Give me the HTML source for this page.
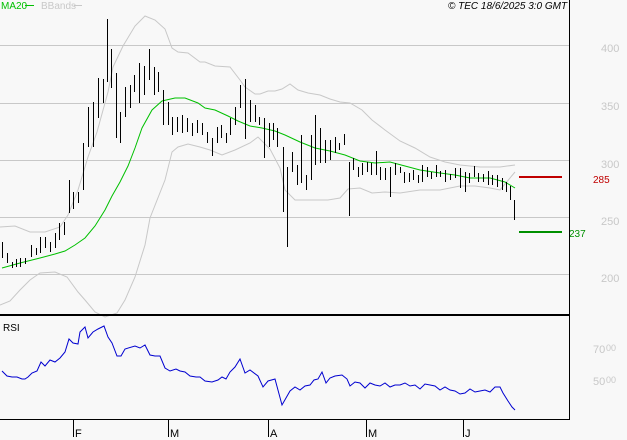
<!DOCTYPE html>
<html><head><meta charset="utf-8"><style>
html,body{margin:0;padding:0;background:#f8f8f8;}
svg{display:block;}
text{font-family:"Liberation Sans",sans-serif;}
</style></head><body>
<svg width="627" height="440" viewBox="0 0 627 440" xmlns="http://www.w3.org/2000/svg">
<rect width="627" height="440" fill="#f8f8f8"/>
<g stroke="#c8c8c8" stroke-width="1" shape-rendering="crispEdges">
<path d="M0 45.5H569M0 103.5H569M0 160.5H569M0 217.5H569M0 274.5H569"/>
</g>
<g fill="#c8c8c8" font-size="11">
<text x="601" y="52">400</text><text x="601" y="110">350</text><text x="601" y="168">300</text><text x="601" y="225">250</text><text x="601" y="282">200</text>
<text x="593" y="353" font-size="11">70</text><text x="606" y="351" font-size="9">00</text>
<text x="593" y="385" font-size="11">50</text><text x="606" y="383" font-size="9">00</text>
</g>
<!-- Bollinger -->
<polyline fill="none" stroke="#c8c8c8" stroke-width="1" points="0,227 15,226 30,232 45,232 60,227 68,215 78,190 88,157 97,132 108,92 113,67 123,46 135,26 145,16 155,20 165,29 172,48 178,52 188,53 200,62 205,62 215,66 230,67 240,80 245,87 255,94 260,94 268,91 275,91 282,89 290,84 298,90 308,93 320,95 330,99 340,102 350,103 362,110 372,120 385,130 400,141 415,148 430,157 445,162 460,165 480,167 500,167 515,165"/>
<polyline fill="none" stroke="#c8c8c8" stroke-width="1" points="0,305 10,301 20,290 30,280 40,273 55,272 67,277 78,292 85,300 95,312 105,317 117,313 125,300 135,277 145,245 150,218 165,180 172,152 178,147 188,144 200,147 210,150 222,155 235,150 250,143 258,137 270,149 280,168 285,190 295,200 310,200 328,200 340,198 348,189 360,188 372,193 385,192 400,193 420,190 440,190 460,186 475,186 490,188 500,190 515,172"/>
<!-- MA20 -->
<polyline fill="none" stroke="#00c000" stroke-width="1" points="2,268 20,263 40,258 55,254 65,251 75,245 85,238 95,226 105,210 112,196 120,182 128,166 135,148 142,128 152,110 162,101 175,98 185,98 198,103 205,108 215,110 228,116 238,121 250,126 262,128 275,131 285,135 300,142 315,148 330,151 345,155 360,161 375,163 390,162 405,166 420,170 440,173 455,175 470,178 490,178 505,182 515,188"/>
<!-- price bars -->
<path fill="none" stroke="#000" stroke-width="1" shape-rendering="crispEdges" d="
M2.5 242V258M7.5 253V263M12.5 262V268M16.5 259V267M20.5 258V267M25.5 258V264M31.5 245V257M36.5 248V255M40.5 237V253M45.5 237V248M50.5 242V252M55.5 233V248M59.5 223V240M64.5 222V235M69.5 180V213M73.5 192V209M78.5 192V203M83.5 143V190M88.5 107V147M93.5 102V147M98.5 78V118M103.5 79V103M107.5 19V82M111.5 49V88M116.5 73V138M120.5 112V143M125.5 87V117M130.5 85V108M134.5 75V92M139.5 63V103M144.5 66V95M149.5 49V80M154.5 67V95M158.5 72V92M163.5 90V125M168.5 102V125M172.5 117V135M177.5 117V132M182.5 115V133M187.5 118V132M192.5 123V136M197.5 120V133M202.5 123V135M207.5 132V143M212.5 138V156M217.5 127V143M221.5 125V138M226.5 133V143M230.5 118V135M235.5 107V125M240.5 85V108M245.5 79V139M250.5 100V122M255.5 105V122M259.5 117V125M264.5 118V158M269.5 123V147M273.5 123V140M277.5 128V147M283.5 147V212M287.5 167V247M292.5 152V172M297.5 165V185M301.5 135V183M306.5 175V190M311.5 135V180M315.5 115V165M320.5 128V163M325.5 140V163M330.5 140V160M335.5 137V153M339.5 143V150M344.5 134V145M349.5 162V216M353.5 158V170M358.5 167V177M362.5 163V175M367.5 162V172M371.5 163V175M376.5 151V175M380.5 167V180M385.5 168V180M390.5 167V197M395.5 163V175M400.5 167V173M404.5 172V183M409.5 173V182M413.5 170V180M418.5 175V183M422.5 165V182M427.5 167V177M431.5 172V179M436.5 165V177M440.5 171V177M445.5 170V182M450.5 174V180M455.5 168V178M460.5 168V188M465.5 172V192M469.5 173V183M474.5 166V177M478.5 173V182M483.5 174V182M488.5 171V185M492.5 175V185M497.5 175V187M502.5 178V190M506.5 182V192M510.5 186V200M514.5 200V220"/>
<!-- support/resist -->
<rect x="519" y="176" width="43" height="2" fill="#c00000"/>
<rect x="519" y="231" width="43" height="2" fill="#009000"/>
<text x="593" y="183" font-size="10" fill="#c00000">285</text>
<text x="569" y="237" font-size="10" fill="#009000">237</text>
<!-- borders -->
<rect x="0" y="314" width="569" height="2" fill="#000"/>
<rect x="569" y="0" width="1" height="419" fill="#000"/>
<rect x="0" y="419" width="570" height="1" fill="#000"/>
<path stroke="#000" stroke-width="1" d="M73.5 419V437M168.5 419V437M268.5 419V437M366.5 419V437M463.5 419V437"/>
<g font-size="11" fill="#000">
<text x="75" y="437">F</text><text x="170" y="437">M</text><text x="270" y="437">A</text><text x="368" y="437">M</text><text x="465" y="437">J</text>
<text x="3" y="331" font-size="10">RSI</text>
<text x="448" y="9" font-size="10" font-style="italic">© TEC 18/6/2025 3:0 GMT</text>
</g>
<text x="1" y="9" font-size="10" fill="#00c000">MA20</text>
<rect x="25" y="5" width="9" height="1" fill="#00c000"/>
<text x="41" y="9" font-size="10" fill="#c8c8c8">BBands</text>
<rect x="74" y="5" width="8" height="1" fill="#c8c8c8"/>
<!-- RSI -->
<polyline fill="none" stroke="#0000d0" stroke-width="1" points="2,371 7,376 12,377 17,377 22,379 25,379 28,377 32,373 37,371 41,362 45,366 50,360 55,362 60,358 65,352 69,339 73,343 78,344 80,332 85,327 88,338 93,332 98,329 104,326 108,337 112,343 117,356 121,356 125,349 135,346 140,348 145,345 150,355 155,356 160,356 165,368 170,371 176,369 180,371 185,372 190,376 196,377 200,377 205,381 212,382 218,380 222,377 226,379 230,372 235,367 240,359 245,373 250,370 258,376 263,387 268,381 275,379 282,405 290,391 295,387 300,390 305,386 310,385 314,380 318,379 322,372 326,383 330,378 335,376 342,375 347,379 350,386 355,382 360,383 365,388 370,383 375,385 380,386 385,383 390,387 395,385 400,385 405,383 410,386 415,385 420,389 425,384 430,385 435,386 440,390 445,387 450,390 455,391 460,394 465,393 470,389 475,392 480,391 485,390 490,392 495,387 500,387 503,393 508,401 512,407 515,410"/>
</svg>
</body></html>
